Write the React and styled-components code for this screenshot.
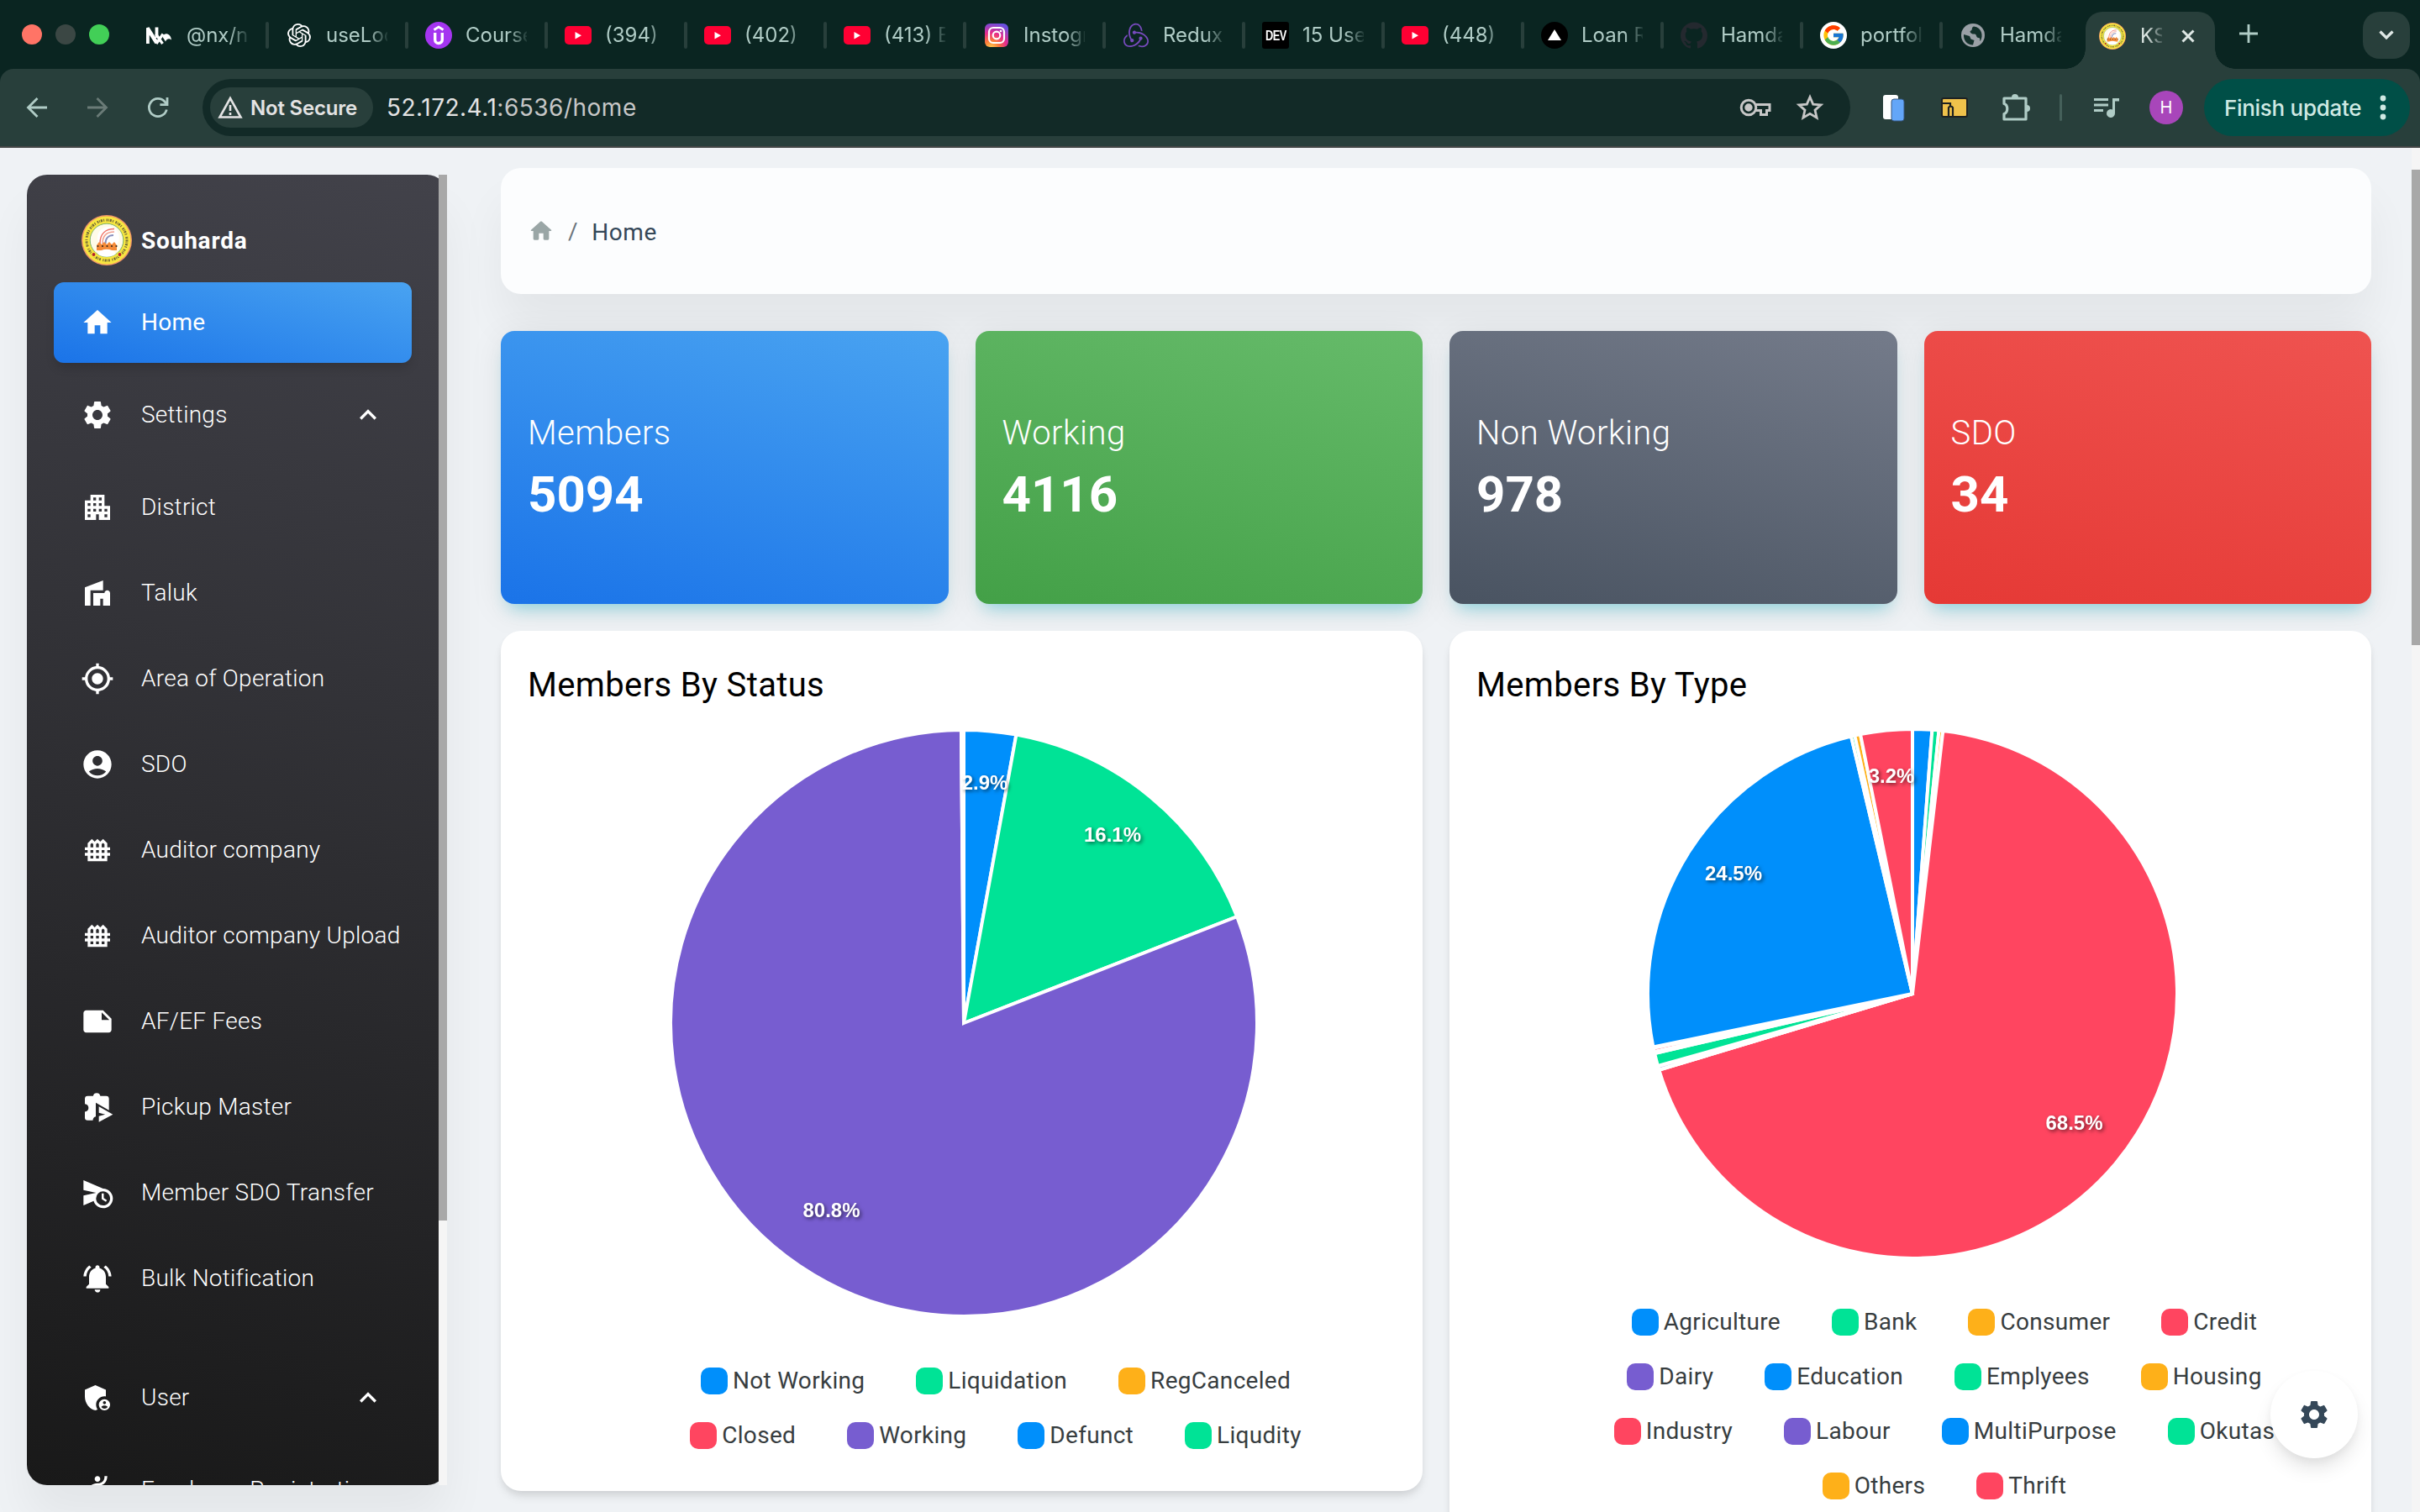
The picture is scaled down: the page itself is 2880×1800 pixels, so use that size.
import React from "react";
import styled, { createGlobalStyle, css } from "styled-components";
import {
  MdHome,
  MdSettings,
  MdApartment,
  MdVilla,
  MdMyLocation,
  MdAccountCircle,
  MdFence,
  MdNote,
  MdScheduleSend,
  MdNotificationsActive,
  MdAdminPanelSettings,
  MdHail,
  MdExpandLess,
} from "react-icons/md";
import { SiOpenai, SiRedux, SiGithub } from "react-icons/si";
import { FcGoogle } from "react-icons/fc";

const GlobalStyle = createGlobalStyle`
  *, *::before, *::after { box-sizing: border-box; }
  html, body { margin: 0; padding: 0; }
  body { background: #eff2f5; font-family: Roboto, "Noto Sans", sans-serif; overflow: hidden; }
  svg { display: block; flex: none; }
`;

const Window = styled.div`
  display: flex;
  flex-direction: column;
  width: 2880px;
  height: 1800px;
  overflow: hidden;
  background: #eff2f5;
`;

/* ---------- Browser chrome ---------- */

const chromeFont = css`
  font-family: Inter, "Liberation Sans", sans-serif;
`;

const TabStrip = styled.div`
  ${chromeFont}
  display: flex;
  height: 82px;
  flex: none;
  background: #0a2521;
  padding-left: 26px;
`;

const TrafficLights = styled.div`
  display: flex;
  align-items: center;
  gap: 16px;
  width: 128px;
  height: 82px;
`;

const Light = styled.span`
  width: 24px;
  height: 24px;
  border-radius: 50%;
  background: ${(p) => p.$color};
`;

const Tab = styled.div`
  display: flex;
  align-items: center;
  width: 166px;
  height: 84px;
  padding-left: 20px;
  gap: 16px;
`;

const TabTitle = styled.span`
  width: 73px;
  overflow: hidden;
  white-space: nowrap;
  font-size: 24px;
  line-height: 32px;
  letter-spacing: 0;
  color: #b0ccc6;
  mask-image: linear-gradient(90deg, #000 50px, transparent 76px);
`;

const TabDivider = styled.span`
  width: 4px;
  height: 32px;
  margin-left: 5px;
  border-radius: 2px;
  background: ${(p) => (p.$hidden ? "transparent" : "#283f3b")};
`;

const Favicon = styled.span`
  display: flex;
  align-items: center;
  justify-content: center;
  flex: none;
  width: 32px;
  height: 32px;
  border-radius: ${(p) => p.$radius || "0"};
  background: ${(p) => p.$bg || "transparent"};
  color: ${(p) => p.$color || "#fff"};
  font-size: ${(p) => p.$size || 32}px;
  overflow: hidden;
`;

const DevMark = styled.span`
  font-family: "Liberation Sans", sans-serif;
  font-weight: 700;
  font-size: 14px;
  letter-spacing: -0.6px;
  transform: scale(0.92, 1.15);
`;

const ActiveTab = styled.div`
  position: relative;
  display: flex;
  align-items: center;
  align-self: flex-end;
  width: 154px;
  height: 68px;
  margin-left: 4px;
  padding: 0 0 10px 16px;
  border-radius: 20px 20px 0 0;
  background: #283f3b;
  &::before, &::after {
    content: "";
    position: absolute;
    bottom: 0;
    width: 24px;
    height: 24px;
  }
  &::before {
    left: -24px;
    background: radial-gradient(circle at 0 0, transparent 23.5px, #283f3b 24px);
  }
  &::after {
    right: -24px;
    background: radial-gradient(circle at 100% 0, transparent 23.5px, #283f3b 24px);
  }
`;

const ActiveTitle = styled(TabTitle)`
  width: 26px;
  margin: 0 23px 0 17px;
  color: #dfe8e5;
  mask-image: linear-gradient(90deg, #000 8px, transparent 30px);
`;

const NewTab = styled.div`
  display: flex;
  align-items: center;
  width: 40px;
  height: 80px;
  margin-left: 29px;
`;

const TabSearch = styled.div`
  display: flex;
  align-items: center;
  justify-content: center;
  width: 56px;
  height: 56px;
  margin: 14px 12px 0 auto;
  border-radius: 20px;
  background: #283f3b;
`;

const ToolbarBack = styled.div`
  background: #0a2521;
  flex: none;
`;

const Toolbar = styled.div`
  ${chromeFont}
  display: flex;
  align-items: center;
  height: 94px;
  padding: 0 12px 0 28px;
  border-radius: 16px 16px 0 0;
  background: #283f3b;
  border-bottom: 2px solid #444746;
`;

const NavButtons = styled.div`
  display: flex;
  gap: 40px;
  width: 213px;
`;

const AddressBar = styled.div`
  display: flex;
  align-items: center;
  width: 1961px;
  height: 68px;
  padding: 0 31px 0 9px;
  border-radius: 34px;
  background: #122a27;
`;

const SecurityChip = styled.div`
  display: flex;
  align-items: center;
  gap: 9px;
  width: 194px;
  height: 48px;
  padding-left: 9px;
  border-radius: 24px;
  background: #283f3b;
  color: #e3e3e3;
  font-size: 24px;
  font-weight: 600;
  letter-spacing: -0.2px;
  white-space: nowrap;
`;

const Url = styled.div`
  flex: 1;
  margin-left: 16px;
  color: #c7c7c7;
  font-size: 28px;
  letter-spacing: 0.5px;
  em { font-style: normal; color: #e3e3e3; }
`;

const AddressActions = styled.div`
  display: flex;
  align-items: center;
  gap: 29px;
`;

const Extensions = styled.div`
  display: flex;
  align-items: center;
  width: 421px;
  padding-left: 36px;
`;

const ExtSlot = styled.div`
  display: flex;
  justify-content: center;
  flex: none;
  width: ${(p) => p.$w}px;
  margin-left: ${(p) => p.$before || 0}px;
`;

const ToolbarDivider = styled.span`
  width: 3px;
  height: 32px;
  border-radius: 2px;
  background: #45605a;
`;

const Avatar = styled.span`
  display: flex;
  align-items: center;
  justify-content: center;
  width: 40px;
  height: 40px;
  border-radius: 50%;
  background: #a846ba;
  color: #fff;
  font-size: 20px;
`;

const UpdateButton = styled.div`
  display: flex;
  align-items: center;
  justify-content: space-between;
  width: 245px;
  height: 68px;
  padding: 0 27px 0 24px;
  border-radius: 34px;
  background: #004f47;
  color: #cfe9e3;
  font-size: 26px;
  font-weight: 500;
  letter-spacing: -0.3px;
  white-space: nowrap;
`;

const Stroke = ({ w, h, vb, color = "#b0ccc6", sw = 3, children }) => (
  <svg width={w} height={h} viewBox={vb || `0 0 ${w} ${h}`} fill="none" stroke={color} strokeWidth={sw}>
    {children}
  </svg>
);

const NxLogo = () => (
  <svg width="32" height="32" viewBox="0 0 32 32" fill="none" stroke="#fff">
    <path d="M1.500 26V7.500L12.500 25" strokeWidth="4.600" strokeLinejoin="bevel" />
    <path d="M12.500 6.500v12.500" strokeWidth="3.800" />
    <path d="M11.500 14.500l8 11.500M20 14.500L12 26" strokeWidth="3.200" />
    <path d="M19.500 18c1-5.500 9.500-5.500 10.500 3.500-2.500-2-5.500-1.500-7 2z" fill="#fff" stroke="none" />
  </svg>
);

const YoutubeLogo = () => (
  <svg width="32" height="32" viewBox="0 0 32 32">
    <rect y="5" width="32" height="22" rx="5" fill="#ff0033" />
    <path d="M12.500 12v8.500l7.500-4.250z" fill="#fff" />
  </svg>
);

const UdemyLogo = () => (
  <Favicon $radius="50%" $bg="#a435f0">
    <svg width="32" height="32" viewBox="0 0 32 32" fill="none" stroke="#fff" strokeWidth="3.400">
      <path d="M10.500 9.500L16 6.100 21.500 9.500" strokeWidth="2.800" />
      <path d="M11.700 13v8.200a4.300 4.300 0 0 0 8.600 0V13" />
    </svg>
  </Favicon>
);

const InstagramLogo = () => (
  <svg width="28" height="28" viewBox="0 0 28 28">
    <defs>
      <radialGradient id="ig" cx="0.27" cy="1.05" r="1.1">
        <stop offset="0" stopColor="#ffd34f" />
        <stop offset="0.3" stopColor="#fb7a3a" />
        <stop offset="0.6" stopColor="#e62a8c" />
        <stop offset="1" stopColor="#6a50e0" />
      </radialGradient>
    </defs>
    <rect width="28" height="28" rx="6" fill="url(#ig)" />
    <g fill="none" stroke="#fff" strokeWidth="2.200">
      <rect x="5" y="5" width="18" height="18" rx="5" />
      <circle cx="14" cy="14" r="4.300" />
    </g>
    <circle cx="19" cy="9" r="1.300" fill="#fff" />
  </svg>
);

const GlobeLogo = () => (
  <svg width="28" height="28" viewBox="0 0 28 28">
    <circle cx="14" cy="14" r="14" fill="#9aa0a6" />
    <path
      d="M3 13l7 2 1.500 3.500 4 1.500-1.500 5.500C7 25.500 2.500 20 3 13zM15 3.500c-3.500 1.500-1 4-3.500 5s.5 4.500 4 4 1.500 4.500 5 4.500.5 4.500 2.500 3.500c3.500-6 1.500-16-8-17z"
      fill="#13302b"
    />
  </svg>
);

const Emblem = ({ size }) => (
  <svg width={size} height={size} viewBox="0 0 60 60">
    <circle cx="30" cy="30" r="30" fill="#f09468" />
    <circle cx="30" cy="30" r="28.600" fill="#f7e540" />
    <circle
      cx="30"
      cy="30"
      r="24"
      fill="none"
      stroke="#4a4634"
      strokeWidth="3"
      strokeDasharray="1.600 1 .8 .9 2 1.300 1 2.600"
      opacity="0.8"
    />
    <circle cx="30" cy="30" r="19.800" fill="#fffbe8" stroke="#6fae6a" strokeWidth="0.900" />
    <circle cx="32" cy="27" r="13" fill="#fff" />
    <g fill="none" strokeWidth="1.500">
      <path d="M22 34C22 22 29 16.500 39 16.500" stroke="#ef6f62" />
      <path d="M25 34C25 25 30 20 39 20" stroke="#f2a08e" />
      <path d="M28.500 34C28.500 28 32 24 38 24" stroke="#8a91bd" strokeWidth="2" />
    </g>
    <path d="M18 42v-6l3-4 3 3 3-3 3 3 3-3 3 3 3-3 3 4v6z" fill="#f58a38" />
    <g fill="#3a2a1e">
      <circle cx="19.500" cy="37" r="1.100" />
      <circle cx="25" cy="37" r="1.100" />
      <circle cx="30.500" cy="37" r="1.100" />
      <circle cx="36" cy="37" r="1.100" />
      <circle cx="41.500" cy="37" r="1.100" />
    </g>
    <path d="M19 46c5-7 17-7 22 0-5 5-17 5-22 0z" fill="#fff" />
    <circle cx="14.500" cy="47" r="3.200" fill="#f7e540" />
    <circle cx="45.500" cy="47" r="3.200" fill="#f7e540" />
    <circle cx="14.500" cy="47" r="1.900" fill="#b3202c" />
    <circle cx="45.500" cy="47" r="1.900" fill="#b3202c" />
  </svg>
);

const yt = <YoutubeLogo />;
const TABS = [
  { title: "@nx/ne", icon: <NxLogo /> },
  { title: "useLoc", icon: <Favicon $size={28}><SiOpenai /></Favicon> },
  { title: "Course", icon: <UdemyLogo /> },
  { title: "(394)", icon: yt },
  { title: "(402)", icon: yt },
  { title: "(413) E", icon: yt },
  { title: "Instogr", icon: <Favicon><InstagramLogo /></Favicon> },
  { title: "Redux", icon: <Favicon $color="#764abc" $size={30}><SiRedux /></Favicon> },
  { title: "15 Use", icon: <Favicon $bg="#000" $radius="3px"><DevMark>DEV</DevMark></Favicon> },
  { title: "(448)", icon: yt },
  {
    title: "Loan R",
    icon: (
      <Favicon $bg="#000" $radius="50%">
        <svg width="32" height="32" viewBox="0 0 32 32"><path d="M16 9l8 13H8z" fill="#fff" /></svg>
      </Favicon>
    ),
  },
  { title: "Hamda", icon: <Favicon $color="#24292f"><SiGithub /></Favicon> },
  { title: "portfol", icon: <Favicon $bg="#fff" $radius="50%" $size={28}><FcGoogle /></Favicon> },
  { title: "Hamda", icon: <Favicon><GlobeLogo /></Favicon> },
];

function BrowserChrome() {
  return (
    <>
      <TabStrip>
        <TrafficLights>
          <Light $color="#ff7466" />
          <Light $color="#3b4744" />
          <Light $color="#42cf57" />
        </TrafficLights>
        {TABS.map((t, i) => (
          <Tab key={i}>
            {t.icon}
            <TabTitle>{t.title}</TabTitle>
            <TabDivider $hidden={i === TABS.length - 1} />
          </Tab>
        ))}
        <ActiveTab>
          <Emblem size={32} />
          <ActiveTitle>KSS</ActiveTitle>
          <Stroke w={16} h={16} color="#dfe8e5" sw={3}>
            <path d="M1.500 1.500l13 13M14.500 1.500l-13 13" />
          </Stroke>
        </ActiveTab>
        <NewTab>
          <Stroke w={22} h={22} sw={2.800}>
            <path d="M11 0v22M0 11h22" />
          </Stroke>
        </NewTab>
        <TabSearch>
          <Stroke w={18} h={12} color="#dfe8e5" sw={3.200}>
            <path d="M1.500 1.500L9 9l7.500-7.500" />
          </Stroke>
        </TabSearch>
      </TabStrip>
      <ToolbarBack>
        <Toolbar>
          <NavButtons>
            <Stroke w={32} h={32} sw={2.800}><path d="M28 16H6M16.500 5L5.500 16l11 11" /></Stroke>
            <Stroke w={32} h={32} sw={2.800} color="#6a7b77"><path d="M4 16h22M15.500 5l11 11-11 11" /></Stroke>
            <Stroke w={32} h={32} sw={2.800}>
              <path d="M26.300 18.500A10.600 10.600 0 1 1 24 9l3 3.200" />
              <path d="M27 4v8.600h-8.600" />
            </Stroke>
          </NavButtons>
          <AddressBar>
            <SecurityChip>
              <Stroke w={30} h={28} color="#e3e3e3" sw={2.600}>
                <path d="M15 3L2.500 25.500h25z" />
                <path d="M15 11v7M15 20v3" />
              </Stroke>
              Not Secure
            </SecurityChip>
            <Url><em>52.172.4.1</em>:6536/home</Url>
            <AddressActions>
              <Stroke w={38} h={24} color="#c7c7c7" sw={3}>
                <circle cx="11" cy="12" r="8.800" />
                <circle cx="11" cy="12" r="3.200" fill="#c7c7c7" />
                <path d="M19 8.500h17v7h-3.500v5h-7v-5H19" />
              </Stroke>
              <Stroke w={34} h={34} color="#c7c7c7" sw={2.800}>
                <path d="M17 4.500l3.700 8.600 9.300.8-7 6.200 2.100 9.100-8.100-4.800-8.100 4.800L11 20.100l-7-6.200 9.300-.8z" />
              </Stroke>
            </AddressActions>
          </AddressBar>
          <Extensions>
            <ExtSlot $w={32}>
              <svg width="28" height="34" viewBox="0 0 28 34">
                <rect x="1" y="2" width="18" height="29" rx="3" fill="#fff" />
                <rect x="11" y="7" width="15" height="26" rx="3" fill="#63a6f8" stroke="#35557c" />
              </svg>
            </ExtSlot>
            <ExtSlot $w={112}>
              <svg width="32" height="24" viewBox="0 0 32 24">
                <rect x="1" y="1" width="30" height="22" rx="2" fill="#f0c24b" stroke="#1e2222" strokeWidth="2" />
                <path d="M2 7h9v4M9 23V12a3 3 0 0 1 5 0v11" fill="none" stroke="#1e2222" strokeWidth="2.200" />
              </svg>
            </ExtSlot>
            <ExtSlot $w={36}>
              <Stroke w={36} h={36} sw={3.200}>
                <path d="M3 7h26v25H3v-6.500c5-1.500 5-10.500 0-12z" strokeLinejoin="round" />
                <path d="M12 6a4 4 0 0 1 8 0zM30 15a4 4 0 0 1 0 8z" fill="#b0ccc6" stroke="none" />
              </Stroke>
            </ExtSlot>
            <ExtSlot $w={68}><ToolbarDivider /></ExtSlot>
            <ExtSlot $w={42}>
              <svg width="32" height="26" viewBox="0 0 32 26" fill="#b0ccc6">
                <path d="M1 2h17v3H1zM1 8.500h17v3H1zM1 15h11v3H1zM23 2h8v3.500h-5V20a5 5 0 1 1-3-4.600z" />
              </svg>
            </ExtSlot>
            <ExtSlot $w={80} $before={10}><Avatar>H</Avatar></ExtSlot>
          </Extensions>
          <UpdateButton>
            Finish update
            <svg width="10" height="30" viewBox="0 0 10 30" fill="#cfe9e3">
              <circle cx="5" cy="4" r="3.400" />
              <circle cx="5" cy="15" r="3.400" />
              <circle cx="5" cy="26" r="3.400" />
            </svg>
          </UpdateButton>
        </Toolbar>
      </ToolbarBack>
    </>
  );
}

/* ---------- Sidebar ---------- */

const Page = styled.div`
  position: relative;
  display: flex;
  height: 1624px;
  overflow: hidden;
`;

const SidebarFrame = styled.div`
  position: relative;
  flex: none;
  width: 500px;
  height: 1560px;
  margin: 32px 0 0 32px;
`;

const SidebarPanel = styled.nav`
  height: 1560px;
  padding: 48px 32px 0;
  overflow: hidden;
  border-radius: 24px;
  background: linear-gradient(195deg, #42424a, #191919);
  box-shadow: 0 40px 54px 0 rgba(0, 0, 0, 0.05);
`;

const ScrollTrack = styled.div`
  position: absolute;
  top: 0;
  right: 0;
  width: 10px;
  height: 100%;
  padding-top: ${(p) => p.$offset || 0}px;
  background: #f5f5f5;
`;

const ScrollThumb = styled.div`
  height: ${(p) => p.$h}px;
  background: #a8a8a8;
`;

const Brand = styled.div`
  display: flex;
  align-items: center;
  gap: 11px;
  height: 60px;
  margin-bottom: 20px;
  padding-left: 33px;
  color: #fff;
  font-size: 28px;
  font-weight: 700;
  letter-spacing: 0.8px;
`;

const NavItem = styled.div`
  display: flex;
  align-items: center;
  width: 426px;
  height: 96px;
  margin-bottom: ${(p) => p.$gap}px;
  padding-left: 32px;
  border-radius: 12px;
  color: #fff;
  font-size: 28px;
  font-weight: 300;
  letter-spacing: 0.26px;
  white-space: nowrap;
  ${(p) =>
    p.$active &&
    css`
      background: linear-gradient(195deg, #49a3f1, #1a73e8);
      box-shadow: 0 8px 12px -2px rgba(0, 0, 0, 0.15);
      font-weight: 400;
    `}
`;

const NavLabel = styled.span`
  padding-bottom: 2px;
`;

const NavIcon = styled.span`
  display: flex;
  width: 72px;
  font-size: 40px;
`;

const Expand = styled.span`
  display: flex;
  margin: 0 32px 0 auto;
  font-size: 40px;
`;

const PickupIcon = () => (
  <svg width="40" height="40" viewBox="0 0 24 24" fill="#fff">
    <path d="M10.800 8.800L20.200 14.200V6a2 2 0 0 0-2-2h-4.200a2.600 2.600 0 0 0-5.100 0H5a2 2 0 0 0-2 2v3.700c3.500.2 3.500 5.400 0 5.600v4.200a2 2 0 0 0 2 2h3.700c0-1.500.8-2.500 2.100-2.800z" />
    <path d="M13 11.600l10 5.600-10 5.400v-4.200l4.500-1.200L13 16z" />
  </svg>
);

const NAV = [
  { label: "Home", icon: <MdHome />, active: true, gap: 14 },
  { label: "Settings", icon: <MdSettings />, expand: true, gap: 14 },
  { label: "District", icon: <MdApartment /> },
  { label: "Taluk", icon: <MdVilla /> },
  { label: "Area of Operation", icon: <MdMyLocation /> },
  { label: "SDO", icon: <MdAccountCircle /> },
  { label: "Auditor company", icon: <MdFence /> },
  { label: "Auditor company Upload", icon: <MdFence /> },
  { label: "AF/EF Fees", icon: <MdNote /> },
  { label: "Pickup Master", icon: <PickupIcon /> },
  { label: "Member SDO Transfer", icon: <MdScheduleSend /> },
  { label: "Bulk Notification", icon: <MdNotificationsActive />, gap: 46 },
  { label: "User", icon: <MdAdminPanelSettings />, expand: true, gap: 14 },
  { label: "Employee Registration", icon: <MdHail /> },
];

function Sidebar() {
  return (
    <SidebarFrame>
      <SidebarPanel>
        <Brand>
          <Emblem size={60} />
          Souharda
        </Brand>
        {NAV.map((n) => (
          <NavItem key={n.label} $active={n.active} $gap={n.gap ?? 6}>
            <NavIcon>{n.icon}</NavIcon>
            <NavLabel>{n.label}</NavLabel>
            {n.expand && <Expand><MdExpandLess /></Expand>}
          </NavItem>
        ))}
      </SidebarPanel>
      <ScrollTrack><ScrollThumb $h={1245} /></ScrollTrack>
    </SidebarFrame>
  );
}

/* ---------- Main content ---------- */

const Main = styled.main`
  display: flex;
  flex-direction: column;
  flex: none;
  width: 2226px;
  margin-left: 64px;
  padding-top: 24px;
`;

const Breadcrumb = styled.header`
  display: flex;
  align-items: center;
  flex: none;
  height: 150px;
  margin-bottom: 44px;
  padding-left: 32px;
  border-radius: 24px;
  background: #fcfdfe;
  box-shadow: 0 40px 54px 0 rgba(0, 0, 0, 0.05);
  color: #344758;
  font-size: 28px;
  letter-spacing: 0.6px;
`;

const Crumb = styled.span`
  padding-top: 2px;
`;

const Slash = styled.span`
  margin: 0 16px 0 16px;
  color: #6c757d;
`;

const Grid = styled.div`
  display: grid;
  grid-template-columns: repeat(${(p) => p.$cols}, 1fr);
  gap: 32px;
  align-items: start;
  margin-bottom: 32px;
`;

const StatCard = styled.div`
  display: flex;
  flex-direction: column;
  justify-content: center;
  height: 325px;
  padding: 4px 32px 0;
  border-radius: 16px;
  background: linear-gradient(195deg, ${(p) => p.$from}, ${(p) => p.$to});
  box-shadow: 0 8px 40px 0 rgba(0, 0, 0, 0.08), 0 14px 20px -10px rgba(0, 187, 212, 0.4);
  color: #fff;
`;

const StatLabel = styled.div`
  font-size: 40px;
  line-height: 56px;
  font-weight: 350;
  letter-spacing: 0.45px;
`;

const StatValue = styled.div`
  font-size: 60px;
  line-height: 82px;
  padding-top: 4px;
  font-weight: 700;
`;

const ChartCard = styled.section`
  display: flex;
  flex-direction: column;
  height: ${(p) => p.$h}px;
  padding-top: 37px;
  border-radius: 24px;
  background: #fff;
  box-shadow: 0 8px 12px -2px rgba(0, 0, 0, 0.1), 0 4px 8px -2px rgba(0, 0, 0, 0.06);
`;

const ChartTitle = styled.h5`
  margin: 0 0 7px;
  padding-left: 32px;
  color: #000;
  font-size: 40px;
  line-height: 56px;
  font-weight: 400;
  letter-spacing: 0.35px;
`;

const Legend = styled.div`
  display: flex;
  flex-direction: column;
  gap: 33px;
  padding-left: 81px;
`;

const LegendRow = styled.div`
  display: flex;
  justify-content: center;
  gap: 61px;
`;

const LegendItem = styled.div`
  display: flex;
  align-items: center;
  gap: 6px;
  height: 32px;
  color: #373d3f;
  font-size: 28px;
  line-height: 32px;
  letter-spacing: 0.3px;
`;

const Marker = styled.span`
  width: 32px;
  height: 32px;
  border-radius: 10px;
  background: ${(p) => p.$color};
`;

const SliceLabel = styled.text`
  fill: #fff;
  font-family: "Liberation Sans", Arial, sans-serif;
  font-size: 24px;
  font-weight: 700;
  text-anchor: middle;
  filter: drop-shadow(2px 2px 2px rgba(0, 0, 0, 0.55));
`;

const BLUE = "#008ffb";
const GREEN = "#00e396";
const ORANGE = "#feb019";
const RED = "#ff4560";
const PURPLE = "#775dd0";

function Pie({ width, height, cx, cy, r, slices, labels }) {
  const point = (deg) => {
    const a = ((deg - 90) * Math.PI) / 180;
    return `${(cx + r * Math.cos(a)).toFixed(2)} ${(cy + r * Math.sin(a)).toFixed(2)}`;
  };
  return (
    <svg width={width} height={height} viewBox={`0 0 ${width} ${height}`}>
      {slices.map(([from, to, color], i) => (
        <path
          key={i}
          d={`M${cx} ${cy}L${point(from)}A${r} ${r} 0 ${to - from > 180 ? 1 : 0} 1 ${point(to)}Z`}
          fill={color}
          stroke="#fff"
          strokeWidth="4"
        />
      ))}
      {labels.map(([x, y, text]) => (
        <SliceLabel key={text} x={x} y={y}>{text}</SliceLabel>
      ))}
    </svg>
  );
}

function Chart({ title, height, pie, legend }) {
  return (
    <ChartCard $h={height}>
      <ChartTitle>{title}</ChartTitle>
      <Pie {...pie} />
      <Legend>
        {legend.map((row, i) => (
          <LegendRow key={i}>
            {row.map(([name, color]) => (
              <LegendItem key={name}>
                <Marker $color={color} />
                <span>{name}</span>
              </LegendItem>
            ))}
          </LegendRow>
        ))}
      </Legend>
    </ChartCard>
  );
}

const STATUS = {
  title: "Members By Status",
  height: 1024,
  pie: {
    width: 1097,
    height: 777,
    cx: 551,
    cy: 367,
    r: 349,
    slices: [
      [0, 10.300, BLUE],
      [10.300, 68.700, GREEN],
      [68.700, 359.500, PURPLE],
      [359.500, 360, BLUE],
    ],
    labels: [
      [576, 88.500, "2.9%"],
      [728, 151, "16.1%"],
      [393.500, 598, "80.8%"],
    ],
  },
  legend: [
    [["Not Working", BLUE], ["Liquidation", GREEN], ["RegCanceled", ORANGE]],
    [["Closed", RED], ["Working", PURPLE], ["Defunct", BLUE], ["Liqudity", GREEN]],
  ],
};

const TYPE = {
  title: "Members By Type",
  height: 1100,
  pie: {
    width: 1097,
    height: 707,
    cx: 551,
    cy: 332,
    r: 315,
    slices: [
      [0, 4.260, BLUE],
      [4.260, 5.740, GREEN],
      [5.740, 6.620, ORANGE],
      [6.620, 253.250, RED],
      [253.250, 253.300, BLUE],
      [253.300, 254.100, PURPLE],
      [254.150, 256.970, GREEN],
      [256.970, 257.350, ORANGE],
      [257.350, 258.170, RED],
      [258.170, 258.400, PURPLE],
      [258.400, 346.600, BLUE],
      [346.600, 347.450, GREEN],
      [347.400, 348.650, ORANGE],
      [348.650, 360, RED],
    ],
    labels: [
      [526, 80.500, "3.2%"],
      [338, 197, "24.5%"],
      [743.500, 494, "68.5%"],
    ],
  },
  legend: [
    [["Agriculture", BLUE], ["Bank", GREEN], ["Consumer", ORANGE], ["Credit", RED]],
    [["Dairy", PURPLE], ["Education", BLUE], ["Emplyees", GREEN], ["Housing", ORANGE]],
    [["Industry", RED], ["Labour", PURPLE], ["MultiPurpose", BLUE], ["Okutas", GREEN]],
    [["Others", ORANGE], ["Thrift", RED]],
  ],
};

const STATS = [
  ["Members", "5094", "#49a3f1", "#1a73e8"],
  ["Working", "4116", "#66bb6a", "#43a047"],
  ["Non Working", "978", "#747b8a", "#495361"],
  ["SDO", "34", "#ef5350", "#e53935"],
];

const SettingsFab = styled.div`
  position: absolute;
  right: 74px;
  bottom: 64px;
  display: flex;
  align-items: center;
  justify-content: center;
  width: 104px;
  height: 104px;
  border-radius: 50%;
  background: #fff;
  color: #344758;
  font-size: 40px;
  box-shadow: 0 14px 24px -4px rgba(0, 0, 0, 0.12), 0 4px 10px rgba(0, 0, 0, 0.04);
`;

export default function App() {
  return (
    <Window>
      <GlobalStyle />
      <BrowserChrome />
      <Page>
        <Sidebar />
        <Main>
          <Breadcrumb>
            <svg width="32" height="32" viewBox="0 0 24 24" fill="#9aa6a6">
              <path d="M10 19v-5h4v5c0 .55.45 1 1 1h3c.55 0 1-.45 1-1v-7h1.700c.46 0 .68-.57.33-.87L12.670 3.600c-.38-.34-.96-.34-1.340 0l-8.360 7.530c-.34.3-.13.87.33.87H5v7c0 .55.45 1 1 1h3c.55 0 1-.45 1-1z" />
            </svg>
            <Slash>/</Slash>
            <Crumb>Home</Crumb>
          </Breadcrumb>
          <Grid $cols={4}>
            {STATS.map(([label, value, from, to]) => (
              <StatCard key={label} $from={from} $to={to}>
                <StatLabel>{label}</StatLabel>
                <StatValue>{value}</StatValue>
              </StatCard>
            ))}
          </Grid>
          <Grid $cols={2}>
            <Chart {...STATUS} />
            <Chart {...TYPE} />
          </Grid>
        </Main>
        <ScrollTrack $offset={26}><ScrollThumb $h={566} /></ScrollTrack>
        <SettingsFab><MdSettings /></SettingsFab>
      </Page>
    </Window>
  );
}
